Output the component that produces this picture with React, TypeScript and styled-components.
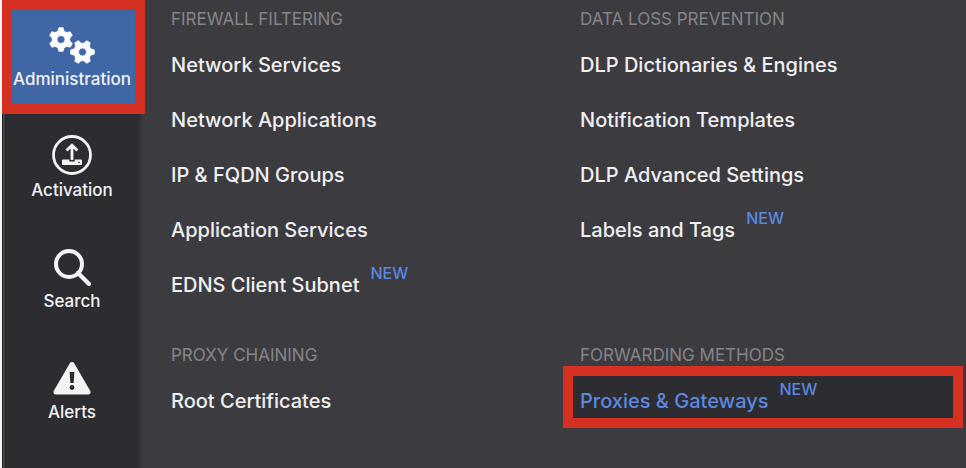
import React from "react";
import styled, { createGlobalStyle, css } from "styled-components";

const GlobalStyle = createGlobalStyle`
  *, *::before, *::after { box-sizing: border-box; }
  body {
    margin: 0;
    background: #3c3b40;
    font-family: Inter, "Liberation Sans", sans-serif;
  }
`;

const Shell = styled.div`
  display: flex;
  min-height: 100vh;
  border-left: 2px solid #f4f4f5;
`;

const Sidebar = styled.nav`
  flex: 0 0 143px;
  display: flex;
  flex-direction: column;
  background: linear-gradient(
    to right,
    #1f1f22 0 1px,
    #4a4a4e 1px 2px,
    #2d2c31 3px 136px,
    #3c3b40 141px
  );
`;

const NavButton = styled.button<{ $active?: boolean }>`
  display: flex;
  flex-direction: column;
  align-items: center;
  height: 111px;
  padding: 18px 3px 0 0;
  border: 0;
  background: transparent;
  color: #f3f3f6;
  font: 500 17px/24px Inter, "Liberation Sans", sans-serif;
  white-space: nowrap;
  cursor: pointer;

  ${({ $active }) =>
    $active &&
    css`
      height: 114px;
      padding-top: 11px;
      border: 10px solid #d63022;
      background: #3f66a5;
    `}
`;

const IconSlot = styled.span`
  display: flex;
  height: 46px;

  svg {
    display: block;
  }
`;

const Panel = styled.main`
  flex: 1;
  min-width: 0;
  display: grid;
  grid-template-columns: repeat(2, minmax(0, 1fr));
  align-content: start;
  row-gap: 24px;
  padding-right: 3px;
`;

const Group = styled.section`
  padding-left: 26px;
`;

const GroupTitle = styled.h2`
  margin: 0;
  padding: 7px 0 6px;
  color: #858589;
  font-size: 17px;
  font-weight: 400;
  line-height: 24px;
  white-space: nowrap;
`;

const Links = styled.ul`
  margin: 0;
  padding: 0;
  list-style: none;
`;

const LinkRow = styled.li<{ $highlighted?: boolean }>`
  display: flex;
  align-items: center;
  height: 55px;

  ${({ $highlighted }) =>
    $highlighted &&
    css`
      height: 62px;
      margin: -7px 0 0 -17px;
      padding: 8px 0 0 7px;
      border: 10px solid #d63022;
      background: #2d2c31;
    `}
`;

const MenuLink = styled.a<{ $current?: boolean }>`
  color: ${({ $current }) => ($current ? "#5b88e0" : "#f0f0f3")};
  font-size: 20px;
  font-weight: 500;
  line-height: 24px;
  text-decoration: none;
  white-space: nowrap;
`;

const NewTag = styled.span`
  margin-left: 11px;
  padding-bottom: 24px;
  color: #5b88e0;
  font-size: 16px;
  font-weight: 500;
  line-height: 20px;
`;

function gearPath(cx: number, cy: number, rotation: number): string {
  const profile: Array<[number, number]> = [
    [-30, 8.6],
    [-18, 9.4],
    [-10, 12],
    [10, 12],
    [18, 9.4],
  ];
  const points: string[] = [];
  for (let tooth = 0; tooth < 6; tooth += 1) {
    profile.forEach(([angle, radius]) => {
      const a = ((angle + tooth * 60 + rotation) * Math.PI) / 180;
      points.push(
        `${(cx + radius * Math.cos(a)).toFixed(2)} ${(cy + radius * Math.sin(a)).toFixed(2)}`
      );
    });
  }
  const hole = `M${cx - 4} ${cy}a4 4 0 1 0 8 0a4 4 0 1 0 -8 0Z`;
  return `M${points.join("L")}Z${hole}`;
}

const GearsIcon = () => (
  <svg width="48" height="46" viewBox="0 0 48 46" aria-hidden="true">
    <g fill="#fff" stroke="#fff" strokeWidth="0.8" strokeLinejoin="round" fillRule="evenodd">
      <path d={gearPath(13, 18.5, 30)} />
      <path d={gearPath(34.5, 31, 0)} />
    </g>
  </svg>
);

const ActivationIcon = () => (
  <svg width="42" height="46" viewBox="0 0 42 46" fill="none" stroke="#f3f3f6" aria-hidden="true">
    <circle cx="21" cy="23" r="18.5" strokeWidth="2.8" />
    <path d="M21 28V14.5M15.5 18.5L21 13.2L26.5 18.5" strokeWidth="2.8" />
    <path
      d="M12 27.5H18.3V29.4H23.7V27.5H30Q31 27.5 31 28.5V32Q31 33 30 33H12Q11 33 11 32V28.5Q11 27.5 12 27.5Z"
      fill="#f3f3f6"
      stroke="none"
    />
    <circle cx="28" cy="30.5" r="0.8" fill="#2d2c31" stroke="none" />
  </svg>
);

const SearchIcon = () => (
  <svg width="42" height="46" viewBox="0 0 42 46" fill="none" stroke="#f3f3f6" aria-hidden="true">
    <circle cx="18" cy="21" r="13" strokeWidth="4" />
    <path d="M27 30L38 41" strokeWidth="4.2" strokeLinecap="round" />
  </svg>
);

const AlertIcon = () => (
  <svg width="42" height="46" viewBox="0 0 42 46" aria-hidden="true">
    <path
      d="M21 10.5L37 38H5Z"
      fill="#f3f3f6"
      stroke="#f3f3f6"
      strokeWidth="5"
      strokeLinejoin="round"
    />
    <path d="M18.6 18H23.4L22.7 29H19.3Z" fill="#2d2c31" />
    <circle cx="21" cy="33.5" r="2.4" fill="#2d2c31" />
  </svg>
);

const navItems = [
  { label: "Administration", icon: <GearsIcon />, active: true },
  { label: "Activation", icon: <ActivationIcon /> },
  { label: "Search", icon: <SearchIcon /> },
  { label: "Alerts", icon: <AlertIcon /> },
];

interface MenuEntry {
  label: string;
  isNew?: boolean;
  current?: boolean;
}

const groups: Array<{ id: string; title: string; entries: MenuEntry[] }> = [
  {
    id: "firewall",
    title: "FIREWALL FILTERING",
    entries: [
      { label: "Network Services" },
      { label: "Network Applications" },
      { label: "IP & FQDN Groups" },
      { label: "Application Services" },
      { label: "EDNS Client Subnet", isNew: true },
    ],
  },
  {
    id: "dlp",
    title: "DATA LOSS PREVENTION",
    entries: [
      { label: "DLP Dictionaries & Engines" },
      { label: "Notification Templates" },
      { label: "DLP Advanced Settings" },
      { label: "Labels and Tags", isNew: true },
    ],
  },
  {
    id: "proxy",
    title: "PROXY CHAINING",
    entries: [{ label: "Root Certificates" }],
  },
  {
    id: "forwarding",
    title: "FORWARDING METHODS",
    entries: [{ label: "Proxies & Gateways", isNew: true, current: true }],
  },
];

export default function App() {
  return (
    <>
      <GlobalStyle />
      <Shell>
        <Sidebar>
          {navItems.map(({ label, icon, active }) => (
            <NavButton key={label} type="button" $active={active}>
              <IconSlot>{icon}</IconSlot>
              {label}
            </NavButton>
          ))}
        </Sidebar>
        <Panel>
          {groups.map((group) => (
            <Group key={group.id} aria-labelledby={group.id}>
              <GroupTitle id={group.id}>{group.title}</GroupTitle>
              <Links>
                {group.entries.map(({ label, isNew, current }) => (
                  <LinkRow key={label} $highlighted={current}>
                    <MenuLink href="#" $current={current}>
                      {label}
                    </MenuLink>
                    {isNew && <NewTag>NEW</NewTag>}
                  </LinkRow>
                ))}
              </Links>
            </Group>
          ))}
        </Panel>
      </Shell>
    </>
  );
}
